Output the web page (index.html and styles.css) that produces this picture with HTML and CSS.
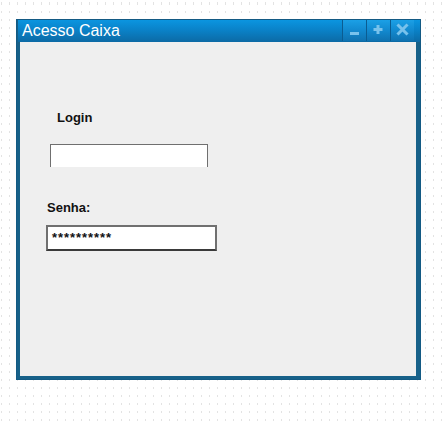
FILE: index.html
```html
<!DOCTYPE html>
<html lang="pt">
<head>
<meta charset="utf-8">
<title>Acesso Caixa</title>
<link rel="stylesheet" href="styles.css">
</head>
<body>
<div class="window">
  <div class="titlebar">
    <span class="title">Acesso Caixa</span>
    <div class="controls">
      <button class="ctl" aria-label="Minimizar">
        <svg width="23" height="21" viewBox="0 0 23 21"><rect x="7" y="12" width="9" height="3" fill="#78c2ec"/></svg>
      </button>
      <button class="ctl" aria-label="Maximizar">
        <svg width="22" height="21" viewBox="0 0 22 21"><rect x="6.5" y="8" width="9" height="3" fill="#78c2ec"/><rect x="9.5" y="5" width="3" height="9" fill="#78c2ec"/></svg>
      </button>
      <button class="ctl" aria-label="Fechar">
        <svg width="23" height="21" viewBox="0 0 23 21"><path d="M7.5 5.5 L15.5 13.5 M15.5 5.5 L7.5 13.5" stroke="#78c2ec" stroke-width="3" stroke-linecap="square"/></svg>
      </button>
    </div>
  </div>
  <div class="content">
    <div class="label login-label">Login</div>
    <div class="login-box"></div>
    <div class="label senha-label">Senha:</div>
    <div class="senha-box">**********</div>
  </div>
</div>
</body>
</html>
```

FILE: styles.css
```css
html, body {
  margin: 0;
  padding: 0;
}
body {
  width: 442px;
  height: 425px;
  overflow: hidden;
  font-family: "Liberation Sans", Arial, sans-serif;
  background-color: #fff;
  background-image:
    repeating-linear-gradient(to bottom, transparent 0 2px, #fff 2px 8px),
    repeating-linear-gradient(to right, #e3e3e3 0 1px, #fff 1px 8px);
  background-position: 1px 3px, 1px 3px;
}
.window {
  margin: 19px 0 0 16px;
  width: 405px;
  height: 361px;
  box-sizing: border-box;
  border: 1px solid #135a84;
  background: #176189;
  display: flex;
  flex-direction: column;
}
.titlebar {
  height: 22px;
  flex: none;
  display: flex;
  align-items: stretch;
  background: linear-gradient(to bottom, #0b95e0 0%, #0a82c8 45%, #0c6aa5 100%);
  margin: 0 0 0 1px;
}
.title {
  flex: 1;
  color: #fff;
  font-size: 16px;
  line-height: 21px;
  padding-left: 4px;
  white-space: nowrap;
}
.controls {
  display: flex;
  margin-right: 6px;
  height: 21px;
}
.ctl {
  border: 0;
  border-left: 1px solid #0b5c91;
  padding: 0;
  margin: 0;
  width: 24px;
  height: 21px;
  background: linear-gradient(to bottom, #1ba0e6 0%, #1289cf 50%, #0f72b0 100%);
  display: block;
}
.ctl svg {
  display: block;
}
.content {
  flex: 1;
  margin: 0 4px 3px 3px;
  background: #efefef;
  padding-top: 68px;
}
.label {
  font-size: 13px;
  line-height: 15px;
  font-weight: bold;
  color: #111;
}
.login-label {
  margin-left: 37px;
}
.login-box {
  margin: 19px 0 0 30px;
  width: 158px;
  height: 23px;
  box-sizing: border-box;
  background: #fff;
  border: 1px solid #6f6f6f;
  border-bottom: 0;
}
.senha-label {
  margin: 33px 0 0 27px;
}
.senha-box {
  margin: 10px 0 0 26px;
  width: 171px;
  height: 26px;
  box-sizing: border-box;
  background: #fff;
  border: 2px solid #707070;
  border-bottom-color: #3a3a3a;
  font-family: "Liberation Sans", Arial, sans-serif;
  font-weight: bold;
  font-size: 13px;
  letter-spacing: 0.95px;
  line-height: 15px;
  padding: 3px 0 0 4px;
  color: #111;
}
```
